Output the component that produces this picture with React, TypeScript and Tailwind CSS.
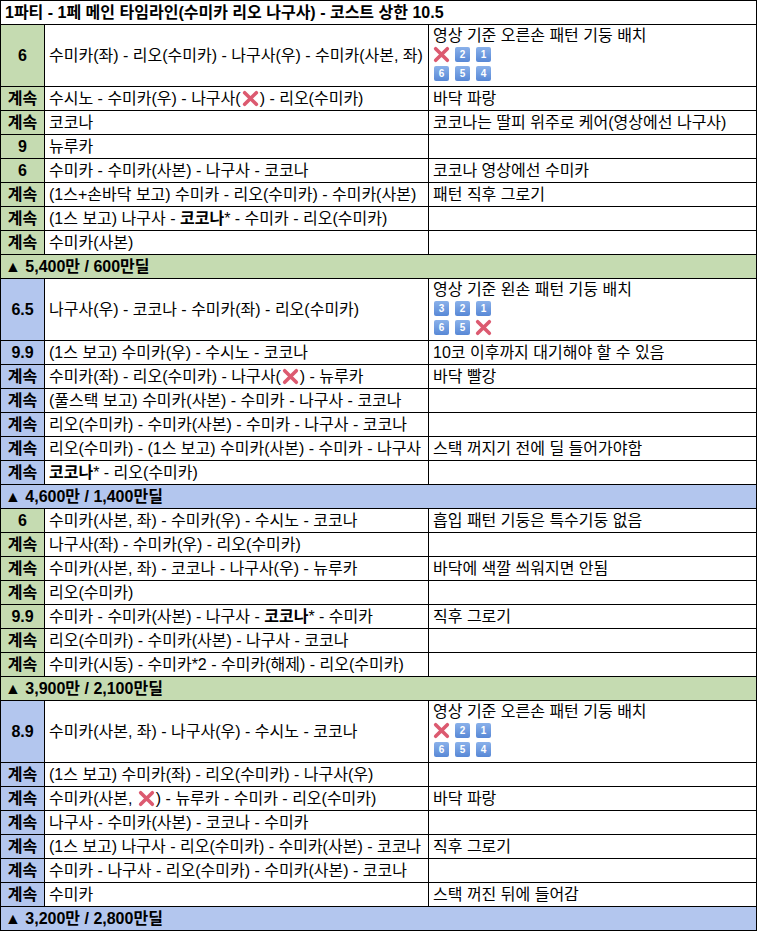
import type { ReactNode } from 'react';

const GREEN = 'bg-[#c5dbb1]';
const BLUE = 'bg-[#b3c6ee]';

type Row =
  | { kind: 'header'; text: string; blue: boolean }
  | { kind: 'data'; label: string; blue: boolean; main: string; note?: string; icons?: string[][] };

function CrossMark({ inline = false }: { inline?: boolean }) {
  return (
    <svg
      viewBox="0 0 16 16"
      className={inline ? 'inline-block w-[17px] h-[17px] align-[-3px] mx-[1px]' : 'w-[17px] h-[17px]'}
    >
      <path d="M2.5 2.5 L13.5 13.5 M13.5 2.5 L2.5 13.5" stroke="#dc5a70" strokeWidth="3.4" strokeLinecap="round" />
    </svg>
  );
}

function Keycap({ n }: { n: string }) {
  return (
    <span className="w-[17px] h-[17px] flex items-center justify-center">
      <span className="w-[15px] h-[15px] rounded-[2px] bg-gradient-to-b from-[#8ab1ea] to-[#5888d6] text-white text-[10px] font-bold leading-none flex items-center justify-center">
        {n}
      </span>
    </span>
  );
}

function rich(text: string): ReactNode[] {
  return text.split(/(❌|\{[^}]+\})/).map((part, i) => {
    if (part === '❌') return <CrossMark key={i} inline />;
    if (part.startsWith('{')) return <b key={i}>{part.slice(1, -1)}</b>;
    return <span key={i}>{part}</span>;
  });
}

const rows: Row[] = [
  { kind: 'data', label: '6', blue: false, main: '수미카(좌) - 리오(수미카) - 나구사(우) - 수미카(사본, 좌)', note: '영상 기준 오른손 패턴 기둥 배치', icons: [['x', '2', '1'], ['6', '5', '4']] },
  { kind: 'data', label: '계속', blue: false, main: '수시노 - 수미카(우) - 나구사(❌) - 리오(수미카)', note: '바닥 파랑' },
  { kind: 'data', label: '계속', blue: false, main: '코코나', note: '코코나는 딸피 위주로 케어(영상에선 나구사)' },
  { kind: 'data', label: '9', blue: false, main: '뉴루카' },
  { kind: 'data', label: '6', blue: false, main: '수미카 - 수미카(사본) - 나구사 - 코코나', note: '코코나 영상에선 수미카' },
  { kind: 'data', label: '계속', blue: false, main: '(1스+손바닥 보고) 수미카 - 리오(수미카) - 수미카(사본)', note: '패턴 직후 그로기' },
  { kind: 'data', label: '계속', blue: false, main: '(1스 보고) 나구사 - {코코나}* - 수미카 - 리오(수미카)' },
  { kind: 'data', label: '계속', blue: false, main: '수미카(사본)' },
  { kind: 'header', text: '▲ 5,400만 / 600만딜', blue: false },
  { kind: 'data', label: '6.5', blue: true, main: '나구사(우) - 코코나 - 수미카(좌) - 리오(수미카)', note: '영상 기준 왼손 패턴 기둥 배치', icons: [['3', '2', '1'], ['6', '5', 'x']] },
  { kind: 'data', label: '9.9', blue: true, main: '(1스 보고) 수미카(우) - 수시노 - 코코나', note: '10코 이후까지 대기해야 할 수 있음' },
  { kind: 'data', label: '계속', blue: true, main: '수미카(좌) - 리오(수미카) - 나구사(❌) - 뉴루카', note: '바닥 빨강' },
  { kind: 'data', label: '계속', blue: true, main: '(풀스택 보고) 수미카(사본) - 수미카 - 나구사 - 코코나' },
  { kind: 'data', label: '계속', blue: true, main: '리오(수미카) - 수미카(사본) - 수미카 - 나구사 - 코코나' },
  { kind: 'data', label: '계속', blue: true, main: '리오(수미카) - (1스 보고) 수미카(사본) - 수미카 - 나구사', note: '스택 꺼지기 전에 딜 들어가야함' },
  { kind: 'data', label: '계속', blue: true, main: '{코코나}* - 리오(수미카)' },
  { kind: 'header', text: '▲ 4,600만 / 1,400만딜', blue: true },
  { kind: 'data', label: '6', blue: false, main: '수미카(사본, 좌) - 수미카(우) - 수시노 - 코코나', note: '흡입 패턴 기둥은 특수기둥 없음' },
  { kind: 'data', label: '계속', blue: false, main: '나구사(좌) - 수미카(우) - 리오(수미카)' },
  { kind: 'data', label: '계속', blue: false, main: '수미카(사본, 좌) - 코코나 - 나구사(우) - 뉴루카', note: '바닥에 색깔 씌워지면 안됨' },
  { kind: 'data', label: '계속', blue: false, main: '리오(수미카)' },
  { kind: 'data', label: '9.9', blue: false, main: '수미카 - 수미카(사본) - 나구사 - {코코나}* - 수미카', note: '직후 그로기' },
  { kind: 'data', label: '계속', blue: false, main: '리오(수미카) - 수미카(사본) - 나구사 - 코코나' },
  { kind: 'data', label: '계속', blue: false, main: '수미카(시동) - 수미카*2 - 수미카(해제) - 리오(수미카)' },
  { kind: 'header', text: '▲ 3,900만 / 2,100만딜', blue: false },
  { kind: 'data', label: '8.9', blue: true, main: '수미카(사본, 좌) - 나구사(우) - 수시노 - 코코나', note: '영상 기준 오른손 패턴 기둥 배치', icons: [['x', '2', '1'], ['6', '5', '4']] },
  { kind: 'data', label: '계속', blue: true, main: '(1스 보고) 수미카(좌) - 리오(수미카) - 나구사(우)' },
  { kind: 'data', label: '계속', blue: true, main: '수미카(사본, ❌) - 뉴루카 - 수미카 - 리오(수미카)', note: '바닥 파랑' },
  { kind: 'data', label: '계속', blue: true, main: '나구사 - 수미카(사본) - 코코나 - 수미카' },
  { kind: 'data', label: '계속', blue: true, main: '(1스 보고) 나구사 - 리오(수미카) - 수미카(사본) - 코코나', note: '직후 그로기' },
  { kind: 'data', label: '계속', blue: true, main: '수미카 - 나구사 - 리오(수미카) - 수미카(사본) - 코코나' },
  { kind: 'data', label: '계속', blue: true, main: '수미카', note: '스택 꺼진 뒤에 들어감' },
  { kind: 'header', text: '▲ 3,200만 / 2,800만딜', blue: true },
];

function DataRow({ row }: { row: Extract<Row, { kind: 'data' }> }) {
  const tall = !!row.icons;
  return (
    <div className={`flex border-b border-black ${tall ? 'h-[62px]' : 'h-[24px]'}`}>
      <div
        className={`w-[44px] shrink-0 border-r border-black flex items-center justify-center font-bold ${
          row.blue ? BLUE : GREEN
        }`}
      >
        {row.label}
      </div>
      <div className="w-[384px] shrink-0 border-r border-black flex items-center pl-[4px] whitespace-nowrap overflow-hidden">
        <span>{rich(row.main)}</span>
      </div>
      <div className={`flex-1 pl-[4px] whitespace-nowrap overflow-hidden ${tall ? 'pt-[1px]' : 'flex items-center'}`}>
        {tall ? (
          <div className="flex flex-col">
            <div className="h-[19px] leading-[19px]">{row.note}</div>
            {row.icons!.map((line, i) => (
              <div key={i} className="h-[19px] flex items-center gap-[4px]">
                {line.map((ic, j) => (ic === 'x' ? <CrossMark key={j} /> : <Keycap key={j} n={ic} />))}
              </div>
            ))}
          </div>
        ) : (
          <span>{row.note}</span>
        )}
      </div>
    </div>
  );
}

export default function App() {
  return (
    <div className="w-[757px] bg-white text-black text-[16px] leading-[19px] font-['Liberation_Sans','Noto_Sans_CJK_KR',sans-serif]">
      <div className="border-t border-l border-r border-black">
        <div className="h-[24px] border-b border-black flex items-center pl-[4px] font-bold whitespace-nowrap">
          1파티 - 1페 메인 타임라인(수미카 리오 나구사) - 코스트 상한 10.5
        </div>
        {rows.map((row, i) =>
          row.kind === 'header' ? (
            <div
              key={i}
              className={`h-[24px] border-b border-black flex items-center pl-[4px] font-bold ${row.blue ? BLUE : GREEN}`}
            >
              {row.text}
            </div>
          ) : (
            <DataRow key={i} row={row} />
          )
        )}
      </div>
    </div>
  );
}
